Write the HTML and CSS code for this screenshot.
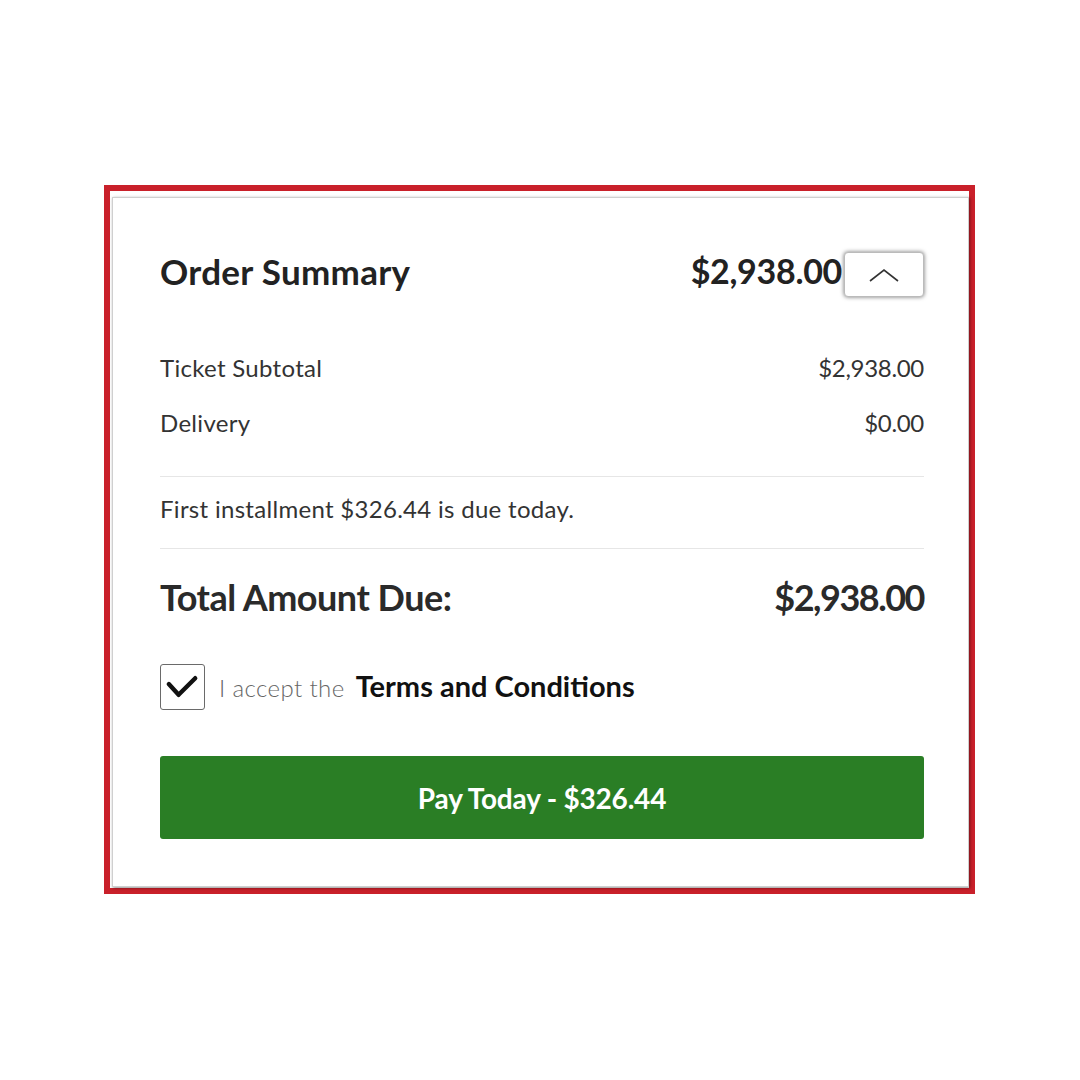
FILE: index.html
```html
<!DOCTYPE html>
<html lang="en">
<head>
<meta charset="utf-8">
<title>Order Summary</title>
<link rel="stylesheet" href="styles.css">
</head>
<body>
<div class="frame">
  <section class="card">
    <header class="head">
      <h2 class="title">Order Summary</h2>
      <div class="head-right">
        <span class="head-amount">$2,938.00</span>
        <button class="toggle" aria-label="Collapse">
          <svg width="32" height="16" viewBox="0 0 32 16"><polyline points="2,14 16,3 30,14" fill="none" stroke="#333" stroke-width="1.6"/></svg>
        </button>
      </div>
    </header>
    <div class="lines">
      <div class="row"><span>Ticket Subtotal</span><span class="num">$2,938.00</span></div>
      <div class="row"><span>Delivery</span><span class="num">$0.00</span></div>
    </div>
    <p class="note">First installment $326.44 is due today.</p>
    <div class="total"><span class="total-label">Total Amount Due:</span><span class="total-amount">$2,938.00</span></div>
    <label class="accept">
      <span class="box">
        <svg width="44" height="44" viewBox="0 0 44 44"><polyline points="8,19 18,30 35,13" fill="none" stroke="#111" stroke-width="4.5" stroke-linecap="round" stroke-linejoin="round"/></svg>
      </span>
      <span class="accept-text">I accept the</span>
      <span class="terms">Terms and Conditions</span>
    </label>
    <button class="pay">Pay Today - $326.44</button>
  </section>
</div>
</body>
</html>
```

FILE: styles.css
```css
html, body {
  margin: 0;
  padding: 0;
  background: #ffffff;
}
body {
  padding: 185px 0 0 104px;
  font-family: Lato, "Liberation Sans", sans-serif;
  color: #2a2a2a;
}
.frame {
  width: 857px;
  height: 691px;
  border: 6px solid #c9202a;
  padding: 6px 0 0 2px;
  box-sizing: content-box;
}
.card {
  width: 857px;
  height: 690px;
  border: 1px solid #cfcfcf;
  box-shadow: 1px 1px 3px rgba(0,0,0,0.45);
  padding: 54px 44px 0 47px;
  box-sizing: border-box;
  display: flex;
  flex-direction: column;
  background: #fff;
}
.head {
  display: flex;
  justify-content: space-between;
  align-items: center;
  height: 45px;
}
.title {
  margin: 0 0 8px;
  font-size: 35px;
  font-weight: 700;
  color: #222;
  letter-spacing: 0.3px;
}
.head-right {
  display: flex;
  align-items: center;
}
.head-amount {
  margin-bottom: 8px;
  font-size: 34px;
  font-weight: 700;
  color: #222;
  letter-spacing: -0.3px;
}
.toggle {
  width: 80px;
  height: 45px;
  margin: 0 0 0 2px;
  padding: 0;
  background: #fff;
  border: 1px solid #bbb;
  border-radius: 4px;
  box-shadow: 0 0 4px rgba(0,0,0,0.55);
  display: flex;
  align-items: center;
  justify-content: center;
}
.lines {
  margin-top: 56px;
  display: flex;
  flex-direction: column;
  gap: 25px;
  padding-bottom: 38px;
  border-bottom: 1px solid #e6e6e6;
}
.row {
  display: flex;
  justify-content: space-between;
  font-size: 24px;
  line-height: 30px;
  color: #333;
  letter-spacing: 0.3px;
}
.num {
  letter-spacing: -0.3px;
}
.note {
  margin: 0;
  padding: 17px 0 24px;
  font-size: 24px;
  line-height: 30px;
  color: #333;
  letter-spacing: 0.3px;
  border-bottom: 1px solid #e6e6e6;
}
.total {
  margin-top: 26px;
  display: flex;
  justify-content: space-between;
  font-size: 36px;
  line-height: 44px;
  font-weight: 700;
  color: #2a2a2a;
}
.total-label {
  letter-spacing: -0.5px;
}
.total-amount {
  letter-spacing: -1.5px;
}
.accept {
  margin-top: 45px;
  display: flex;
  align-items: center;
  height: 46px;
}
.box {
  width: 43px;
  height: 44px;
  border: 1.5px solid #6a6a6a;
  border-radius: 3px;
  display: flex;
  align-items: center;
  justify-content: center;
  box-sizing: content-box;
  flex: none;
}
.accept-text {
  margin-left: 14px;
  font-size: 24px;
  font-weight: 300;
  color: #666;
  letter-spacing: 0.4px;
}
.terms {
  margin-left: 11px;
  margin-bottom: 3px;
  font-size: 29px;
  font-weight: 700;
  color: #111;
}
.pay {
  margin-top: 46px;
  height: 83px;
  width: 100%;
  border: none;
  border-radius: 3px;
  background: #2a7e25;
  color: #fff;
  font-family: Lato, "Liberation Sans", sans-serif;
  font-size: 28px;
  font-weight: 700;
  letter-spacing: -0.2px;
}
```
